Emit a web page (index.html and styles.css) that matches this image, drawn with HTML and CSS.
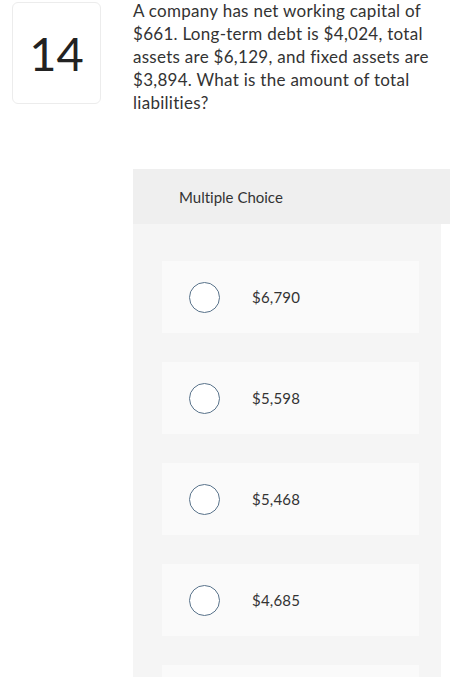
FILE: index.html
```html
<!DOCTYPE html>
<html>
<head>
<meta charset="utf-8">
<link rel="stylesheet" href="styles.css">
</head>
<body>
<div class="top">
  <div class="qnum">14</div>
  <p class="qtext">A company has net working capital of $661. Long-term debt is $4,024, total assets are $6,129, and fixed assets are $3,894. What is the amount of total liabilities?</p>
</div>
<div class="mc">
  <div class="mc-head">Multiple Choice</div>
  <div class="mc-body">
    <div class="opt"><span class="radio"></span><span class="label">$6,790</span></div>
    <div class="opt"><span class="radio"></span><span class="label">$5,598</span></div>
    <div class="opt"><span class="radio"></span><span class="label">$5,468</span></div>
    <div class="opt"><span class="radio"></span><span class="label">$4,685</span></div>
    <div class="opt"></div>
  </div>
</div>
</body>
</html>
```
FILE: styles.css
```css
html, body {
  margin: 0;
  padding: 0;
  background: #ffffff;
  font-family: Lato, "Open Sans", "Liberation Sans", sans-serif;
  font-variant-ligatures: none;
  color: #333333;
}
.top {
  display: flex;
  align-items: flex-start;
  padding: 2px 0 0 12px;
}
.qnum {
  flex: none;
  width: 87px;
  height: 100px;
  border: 1px solid #ececec;
  border-radius: 6px;
  display: flex;
  align-items: center;
  justify-content: center;
  font-size: 47px;
  color: #222222;
  font-weight: 400;
}
.qtext {
  margin: -3px 0 0 32px;
  width: 312px;
  font-size: 17px;
  line-height: 23px;
  letter-spacing: 0.28px;
  color: #333333;
}
.mc {
  margin: 55px 0 0 133px;
}
.mc-head {
  width: 271px;
  height: 55px;
  padding-left: 46px;
  background: #efefef;
  font-size: 15px;
  line-height: 57px;
  color: #333333;
}
.mc-body {
  width: 279px;
  height: 416px;
  padding: 37px 0 0 29px;
  background: #f5f5f5;
  overflow: hidden;
  display: flex;
  flex-direction: column;
  gap: 29px;
}
.opt {
  flex: none;
  width: 257px;
  height: 72px;
  background: #fafafa;
  display: flex;
  align-items: center;
  padding-left: 27px;
  box-sizing: border-box;
}
.radio {
  flex: none;
  width: 29px;
  height: 29px;
  border: 1.5px solid #58728a;
  border-radius: 50%;
  background: #ffffff;
}
.label {
  margin-left: 32px;
  font-size: 15px;
  letter-spacing: 0.2px;
  color: #333333;
}
```
